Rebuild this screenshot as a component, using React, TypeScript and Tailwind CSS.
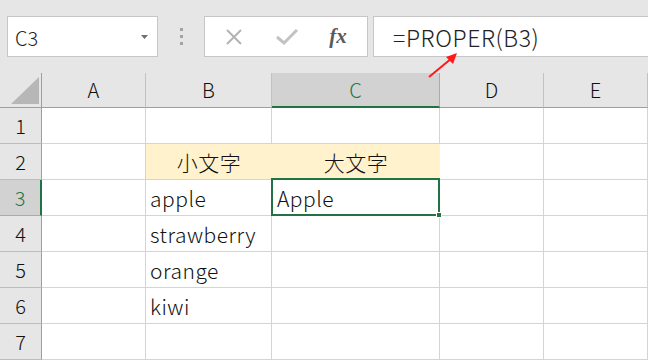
import React from "react";

const font = { fontFamily: '"Noto Sans CJK JP", "Noto Sans", sans-serif' };

const cols = ["A", "B", "C", "D", "E"];

type Cell = { text?: string; fill?: boolean; center?: boolean };

const rows: Cell[][] = [
  [{}, {}, {}, {}, {}],
  [{}, { text: "小文字", fill: true, center: true }, { text: "大文字", fill: true, center: true }, {}, {}],
  [{}, { text: "apple" }, { text: "Apple" }, {}, {}],
  [{}, { text: "strawberry" }, {}, {}, {}],
  [{}, { text: "orange" }, {}, {}, {}],
  [{}, { text: "kiwi" }, {}, {}, {}],
  [{}, {}, {}, {}, {}],
];

const Toolbar: React.FC = () => {
  return (
    <div className="h-[73px] bg-[#e6e6e6] flex items-start pt-[16px] pl-[7px] gap-0">
      <div className="w-[151px] h-[41px] bg-white border border-[#c6c6c6] flex items-center pl-[7px] pr-[9px]">
        <span className="text-[20px] font-light text-[#222] leading-none flex-1 pt-[2px]">C3</span>
        <svg width="7" height="4" viewBox="0 0 7 4">
          <path d="M0 0 L7 0 L3.5 4 Z" fill="#6f6f6f" />
        </svg>
      </div>
      <div className="w-[46px] h-[41px] flex flex-col items-center justify-center gap-[4px]">
        <div className="w-[3px] h-[3px] bg-[#a3a3a3]" />
        <div className="w-[3px] h-[3px] bg-[#a3a3a3]" />
        <div className="w-[3px] h-[3px] bg-[#a3a3a3]" />
      </div>
      <div className="w-[164px] h-[41px] bg-white border border-[#c6c6c6] flex items-center">
        <div className="w-[56px] flex justify-center pl-[1px]">
          <svg width="18" height="18" viewBox="0 0 18 18">
            <path d="M2 2 L16 16 M16 2 L2 16" stroke="#b3b3b3" strokeWidth="2" />
          </svg>
        </div>
        <div className="w-[52px] flex justify-center">
          <svg width="22" height="16" viewBox="0 0 22 16">
            <path d="M1 8 L8 14 L21 1" stroke="#c2c2c2" strokeWidth="3" fill="none" />
          </svg>
        </div>
        <div className="flex-1 flex justify-center pr-[4px]">
          <span
            className="text-[21px] italic font-semibold text-[#5a5a5a] leading-none"
            style={{ fontFamily: '"Liberation Serif", "DejaVu Serif", serif' }}
          >
            fx
          </span>
        </div>
      </div>
      <div className="ml-[5px] flex-1 h-[41px] bg-white border border-r-0 border-[#c6c6c6] flex items-center pl-[19px]">
        <span className="text-[23px] font-light text-[#222] leading-none pt-[2px] tracking-[0.6px]">=PROPER(B3)</span>
      </div>
    </div>
  );
};

const App: React.FC = () => {
  return (
    <div className="relative w-[648px] h-[361px] overflow-hidden bg-white" style={font}>
      <Toolbar />
      <div className="grid grid-cols-[42px_104px_126px_168px_104px_104px] grid-rows-[35px_repeat(7,36px)] text-[#111] font-light">
        {/* header row */}
        <div className="bg-[#e6e6e6] border-r border-b border-[#9e9e9e] relative">
          <svg className="absolute left-[11px] top-[4px]" width="28" height="27" viewBox="0 0 28 27">
            <path d="M28 0 L28 27 L0 27 Z" fill="#b7b7b7" />
          </svg>
        </div>
        {cols.map((c) =>
          c === "C" ? (
            <div
              key={c}
              className="bg-[#d2d2d2] border-b-2 border-b-[#217346] border-r border-r-[#ababab] flex items-center justify-center text-[20px] text-[#217346]"
            >
              {c}
            </div>
          ) : (
            <div
              key={c}
              className="bg-[#e6e6e6] border-b border-b-[#9e9e9e] border-r border-r-[#c2c2c2] flex items-center justify-center text-[20px]"
            >
              {c}
            </div>
          )
        )}
        {rows.map((r, i) => (
          <React.Fragment key={i}>
            {i === 2 ? (
              <div className="bg-[#d2d2d2] border-r-2 border-r-[#217346] border-b border-b-[#ababab] flex items-center justify-center text-[20px] text-[#217346]">
                {i + 1}
              </div>
            ) : (
              <div className="bg-[#e6e6e6] border-r border-r-[#9e9e9e] border-b border-b-[#bdbdbd] flex items-center justify-center text-[20px]">
                {i + 1}
              </div>
            )}
            {r.map((cell, j) => {
              const selected = i === 2 && j === 2;
              if (selected) {
                return (
                  <div
                    key={j}
                    className="relative -ml-[1px] -mt-[2px] border-2 border-[#217346] flex items-center pl-[4px] pt-[3px] text-[21px] tracking-[0.5px] z-10"
                  >
                    {cell.text}
                    <div className="absolute -right-[4px] -bottom-[4px] w-[6px] h-[6px] bg-[#217346] border border-white" />
                  </div>
                );
              }
              return (
                <div
                  key={j}
                  className={
                    (cell.fill ? "bg-[#fff2cc] " : "border-r border-r-[#d4d4d4] ") +
                    "border-b border-b-[#d4d4d4] flex items-center pt-[2px] text-[21px] tracking-[0.5px] " +
                    (cell.center ? "justify-center" : "pl-[4px]")
                  }
                >
                  {cell.text}
                </div>
              );
            })}
          </React.Fragment>
        ))}
      </div>
      <svg className="absolute left-[426px] top-[50px]" width="34" height="30" viewBox="0 0 34 30">
        <path d="M3 27 L26 8" stroke="#ff1a1a" strokeWidth="2" />
        <path d="M31 3 L20 7 L27 14 Z" fill="#ff1a1a" />
      </svg>
    </div>
  );
};

export default App;
